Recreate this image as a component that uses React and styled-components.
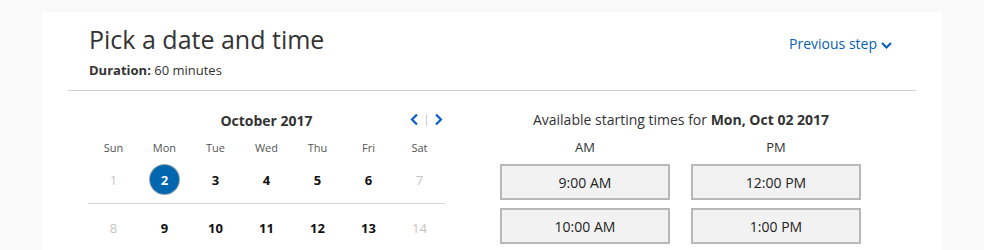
import React from 'react';
import styled, { createGlobalStyle } from 'styled-components';

const GlobalStyle = createGlobalStyle`
  body {
    margin: 0;
    background: #f9f9f9;
    font-family: "Open Sans", "Noto Sans", sans-serif;
    color: #333;
  }
`;

const weeks = [
  [
    { d: 1, off: true },
    { d: 2, selected: true },
    { d: 3 },
    { d: 4 },
    { d: 5 },
    { d: 6 },
    { d: 7, off: true },
  ],
  [
    { d: 8, off: true },
    { d: 9 },
    { d: 10 },
    { d: 11 },
    { d: 12 },
    { d: 13 },
    { d: 14, off: true },
  ],
];

const dayNames = ['Sun', 'Mon', 'Tue', 'Wed', 'Thu', 'Fri', 'Sat'];

const times = [
  ['9:00 AM', '12:00 PM'],
  ['10:00 AM', '1:00 PM'],
];

const Chevron = ({ dir }) => {
  const paths = {
    left: 'M7 1 L2 6 L7 11',
    right: 'M2 1 L7 6 L2 11',
    down: 'M1 2 L5.5 6.5 L10 2',
  };
  const size = dir === 'down' ? { width: 11, height: 9, viewBox: '0 0 11 9' } : { width: 9, height: 13, viewBox: '0 0 9 12' };
  return (
    <svg {...size} fill="none">
      <path d={paths[dir]} stroke="#0a5fc2" strokeWidth="2.2" />
    </svg>
  );
};

const App = () => (
  <>
    <GlobalStyle />
    <Card>
      <Header>
        <div>
          <Title>Pick a date and time</Title>
          <Duration>
            <b>Duration:</b> 60 minutes
          </Duration>
        </div>
        <PrevLink>
          Previous step <Chevron dir="down" />
        </PrevLink>
      </Header>
      <Body>
        <Calendar>
          <MonthBar>
            <Month>October 2017</Month>
            <Nav>
              <Chevron dir="left" />
              <NavSep />
              <Chevron dir="right" />
            </Nav>
          </MonthBar>
          <Grid>
            {dayNames.map((n) => (
              <DayName key={n}>{n}</DayName>
            ))}
          </Grid>
          {weeks.map((w, i) => (
            <Week key={i} $last={i === weeks.length - 1}>
              {w.map((c) => (
                <DayCell key={c.d}>
                  <Day $off={c.off} $selected={c.selected}>
                    {c.d}
                  </Day>
                </DayCell>
              ))}
            </Week>
          ))}
        </Calendar>
        <Times>
          <TimesTitle>
            Available starting times for <b>Mon, Oct 02 2017</b>
          </TimesTitle>
          <TimeGrid>
            <Period>AM</Period>
            <Period>PM</Period>
            {times.flat().map((t) => (
              <TimeButton key={t}>{t}</TimeButton>
            ))}
          </TimeGrid>
        </Times>
      </Body>
    </Card>
  </>
);

export default App;

const Card = styled.div`
  margin: 12px 0 0 42px;
  width: 848px;
  height: 238px;
  padding: 0 26px;
  background: #fff;
  overflow: hidden;
`;

const Header = styled.div`
  display: flex;
  justify-content: space-between;
  align-items: flex-start;
  padding: 11px 24px 11px 21px;
  border-bottom: 1px solid #cfcfcf;
`;

const Title = styled.h1`
  margin: 0;
  font-size: 25px;
  font-weight: 400;
  line-height: 32px;
  color: #333;
`;

const Duration = styled.div`
  margin-top: 6px;
  font-size: 13px;
  line-height: 18px;
  color: #333;
  b {
    font-weight: 700;
  }
`;

const PrevLink = styled.a`
  display: flex;
  align-items: center;
  gap: 4px;
  margin-top: 11px;
  font-size: 14px;
  line-height: 20px;
  color: #0a5fb4;
  cursor: pointer;
  svg {
    margin-top: 2px;
  }
`;

const Body = styled.div`
  display: flex;
  gap: 55px;
  padding: 18px 0 0 20px;
`;

const Calendar = styled.div`
  width: 357px;
`;

const MonthBar = styled.div`
  position: relative;
  height: 22px;
  display: flex;
  justify-content: center;
  align-items: center;
`;

const Month = styled.div`
  font-size: 14px;
  font-weight: 700;
  color: #333;
`;

const Nav = styled.div`
  position: absolute;
  right: 2px;
  top: 4px;
  display: flex;
  align-items: center;
  gap: 7px;
`;

const NavSep = styled.span`
  width: 1px;
  height: 12px;
  background: #ccc;
`;

const Grid = styled.div`
  display: grid;
  grid-template-columns: repeat(7, 1fr);
  margin-top: 9px;
`;

const DayName = styled.div`
  text-align: center;
  font-size: 11px;
  line-height: 16px;
  color: #555;
`;

const Week = styled(Grid)`
  margin-top: 0;
  height: 47px;
  align-items: center;
  border-bottom: ${({ $last }) => ($last ? 'none' : '1px solid #d8d8d8')};
`;

const DayCell = styled.div`
  display: flex;
  justify-content: center;
`;

const Day = styled.span`
  display: flex;
  align-items: center;
  justify-content: center;
  width: 29px;
  height: 29px;
  border-radius: 50%;
  font-size: 13px;
  font-weight: ${({ $off }) => ($off ? 400 : 700)};
  color: ${({ $off, $selected }) => ($selected ? '#fff' : $off ? '#c4c4c4' : '#111')};
  background: ${({ $selected }) => ($selected ? '#0066ad' : 'transparent')};
  box-shadow: ${({ $selected }) => ($selected ? '0 0 0 1px #9aa5ae' : 'none')};
`;

const Times = styled.div`
  width: 362px;
`;

const TimesTitle = styled.div`
  height: 22px;
  line-height: 22px;
  text-align: center;
  font-size: 14px;
  color: #333;
  white-space: nowrap;
  b {
    font-weight: 700;
  }
`;

const TimeGrid = styled.div`
  display: grid;
  grid-template-columns: 170px 170px;
  column-gap: 21px;
  row-gap: 8px;
`;

const Period = styled.div`
  text-align: center;
  font-size: 13px;
  line-height: 16px;
  margin-top: 8px;
  margin-bottom: 1px;
  color: #333;
`;

const TimeButton = styled.button`
  height: 36px;
  border: 2px solid #b8b8b8;
  background: #f2f2f2;
  font-family: inherit;
  font-size: 14px;
  color: #222;
  cursor: pointer;
`;
